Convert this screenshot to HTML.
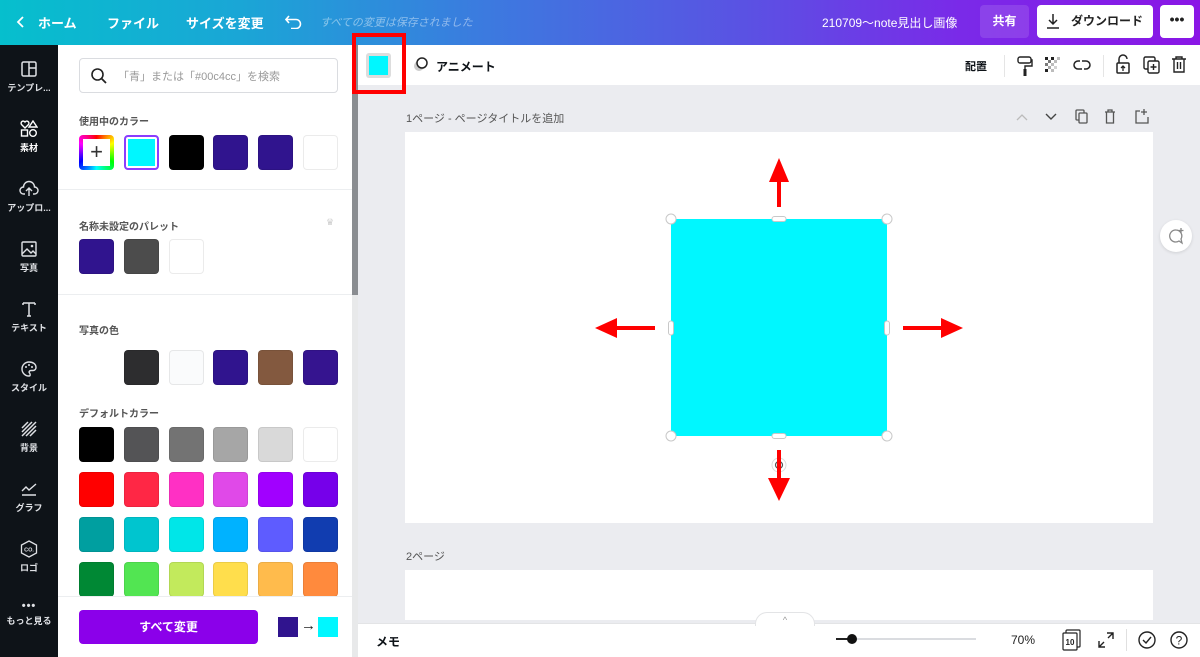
<!DOCTYPE html>
<html><head><meta charset="utf-8"><style>
*{margin:0;padding:0;box-sizing:border-box}
body{width:1200px;height:657px;overflow:hidden;font-family:"Liberation Sans","Noto Sans CJK JP",sans-serif;background:#ebecf0;position:relative;color:#0e1318}
.a{position:absolute}
.top{left:0;top:0;width:1200px;height:45px;background:linear-gradient(90deg,#06bfcd 0%,#1aa6d6 20%,#3b7bdf 40%,#5a52e3 62%,#7a2ae8 80%,#8a16e6 100%)}
.top .t{color:#fff;font-size:13px;font-weight:bold;top:13px}
.side{left:0;top:45px;width:58px;height:612px;background:#0e1318}
.si{position:absolute;left:0;width:58px;text-align:center;color:#dfe1e5;font-size:9px;font-weight:bold}
.si svg{display:block;margin:0 auto 3px}
.panel{left:58px;top:45px;width:294px;height:612px;background:#fff}
.sw{position:absolute;width:35px;height:35px;border-radius:4px;border:1px solid rgba(0,0,0,.08)}
.lb{position:absolute;left:79px;font-size:10px;font-weight:bold;color:#555}
.hr{position:absolute;left:58px;width:294px;height:1px;background:#eceef0}
</style></head><body>
<div class="a top">
 <svg class="a" style="left:16px;top:15px" width="10" height="14"><path d="M7 2 L2 7 L7 12" stroke="#fff" stroke-width="1.8" fill="none"/></svg>
 <div class="a t" style="left:38px">ホーム</div>
 <div class="a t" style="left:107px">ファイル</div>
 <div class="a t" style="left:186px">サイズを変更</div>
 <svg class="a" style="left:285px;top:13px" width="18" height="16"><path d="M4 3 L1 6.5 L4 10 M1.5 6.5 H11 a4.5 4.5 0 0 1 0 9 H6" stroke="#fff" stroke-width="1.6" fill="none"/></svg>
 <div class="a" style="left:320px;top:14px;font-size:11px;color:rgba(255,255,255,.45);font-style:italic">すべての変更は保存されました</div>
 <div class="a t" style="left:822px;font-weight:normal;font-size:12px;top:14px">210709〜note見出し画像</div>
 <div class="a" style="left:980px;top:5px;width:49px;height:33px;background:rgba(255,255,255,.12);border-radius:4px;color:#fff;font-size:12px;font-weight:bold;text-align:center;line-height:33px">共有</div>
 <div class="a" style="left:1037px;top:5px;width:116px;height:33px;background:#fff;border-radius:4px;font-size:12px;font-weight:bold;line-height:33px;padding-left:34px;color:#222">ダウンロード</div>
 <svg class="a" style="left:1046px;top:13px" width="14" height="16"><path d="M7 1 V11 M3 7 L7 11 L11 7 M1 15 H13" stroke="#222" stroke-width="1.5" fill="none"/></svg>
 <div class="a" style="left:1160px;top:5px;width:34px;height:33px;background:#fff;border-radius:4px;text-align:center;line-height:28px;font-weight:bold;font-size:14px;color:#222">•••</div>
</div>
<div class="a side">
 <div class="si" style="top:15px"><svg width="18" height="18"><rect x="2" y="2" width="14" height="14" rx="1.5" stroke="#dfe1e5" stroke-width="1.5" fill="none"/><path d="M9 2V16M9 8H16" stroke="#dfe1e5" stroke-width="1.5"/></svg>テンプレ...</div>
 <div class="si" style="top:75px;color:#fff"><svg width="18" height="18"><path d="M5 8 L1.5 4.5 a2 2 0 0 1 3.5-2.5 a2 2 0 0 1 3.5 2.5Z M13 1 L17 7 H9Z" stroke="#fff" stroke-width="1.4" fill="none"/><rect x="1.5" y="10" width="6" height="6" stroke="#fff" stroke-width="1.4" fill="none"/><circle cx="13" cy="13" r="3.3" stroke="#fff" stroke-width="1.4" fill="none"/></svg>素材</div>
 <div class="si" style="top:135px"><svg width="20" height="18"><path d="M6 14 H4.5 a3.5 3.5 0 0 1 0-7 a5.5 5.5 0 0 1 11 0 a3.5 3.5 0 0 1 0 7 H14 M10 16V8 M7 11 L10 8 L13 11" stroke="#dfe1e5" stroke-width="1.4" fill="none"/></svg>アップロ...</div>
 <div class="si" style="top:195px"><svg width="18" height="18"><rect x="2" y="2" width="14" height="14" rx="1" stroke="#dfe1e5" stroke-width="1.4" fill="none"/><path d="M2 14 L7 9 L11 13 L13 11 L16 14" stroke="#dfe1e5" stroke-width="1.4" fill="none"/><circle cx="12" cy="6" r="1.3" fill="#dfe1e5"/></svg>写真</div>
 <div class="si" style="top:255px"><svg width="18" height="18"><path d="M3 3H15M9 3V16M3 3V5M15 3V5M7 16H11" stroke="#dfe1e5" stroke-width="1.5" fill="none"/></svg>テキスト</div>
 <div class="si" style="top:315px"><svg width="18" height="18"><path d="M9 2 a7 7 0 1 0 0 14 c1.5 0 1.5-2 .5-3 c-1-1 0-2.5 1.5-2.5 H13 a3 3 0 0 0 3-3 C16 4 13 2 9 2Z" stroke="#dfe1e5" stroke-width="1.4" fill="none"/><circle cx="6" cy="7" r="1" fill="#dfe1e5"/><circle cx="9" cy="5" r="1" fill="#dfe1e5"/><circle cx="12" cy="7" r="1" fill="#dfe1e5"/></svg>スタイル</div>
 <div class="si" style="top:375px"><svg width="18" height="18"><path d="M2 8L8 2M2 12L12 2M2 16L16 2M6 16L16 6M10 16L16 10" stroke="#dfe1e5" stroke-width="1.5"/></svg>背景</div>
 <div class="si" style="top:435px"><svg width="18" height="18"><path d="M2 11 L6 7 L9 10 L16 4 M2 15H16" stroke="#dfe1e5" stroke-width="1.4" fill="none"/></svg>グラフ</div>
 <div class="si" style="top:495px"><svg width="20" height="18"><path d="M10 1 L17.5 5 V13 L10 17 L2.5 13 V5Z" stroke="#dfe1e5" stroke-width="1.3" fill="none"/><text x="10" y="11.5" font-size="5.5" fill="#dfe1e5" text-anchor="middle" font-weight="bold" font-family="Liberation Sans">CO.</text></svg>ロゴ</div>
 <div class="si" style="top:555px;font-size:9px"><div style="font-size:11px;letter-spacing:1px;margin-bottom:2px">•••</div>もっと見る</div>
</div>
<div class="a panel"></div>
<div class="a" style="left:352px;top:45px;width:6px;height:250px;background:#8a8d91"></div>
<div class="a" style="left:352px;top:295px;width:6px;height:362px;background:#e8e9ea"></div>
<div class="a" style="left:79px;top:58px;width:259px;height:35px;border:1px solid #dadce0;border-radius:4px"></div>
<svg class="a" style="left:90px;top:67px" width="18" height="18"><circle cx="7.5" cy="7.5" r="5.5" stroke="#222" stroke-width="1.6" fill="none"/><path d="M11.5 11.5L16 16" stroke="#222" stroke-width="1.8"/></svg>
<div class="a" style="left:118px;top:68px;font-size:11px;color:#999">「青」または「#00c4cc」を検索</div>

<div class="lb" style="top:113px">使用中のカラー</div>
<div class="sw" style="left:79px;top:135px;background:conic-gradient(red,yellow,lime,cyan,blue,magenta,red);border:none"><div style="position:absolute;left:4px;top:4px;width:27px;height:27px;background:#fff;text-align:center;line-height:26px;font-size:22px;color:#333">+</div></div>
<div class="sw" style="left:124px;top:135px;background:#00f7ff;border:2px solid #8b3dff;box-shadow:inset 0 0 0 2px #fff"></div>
<div class="sw" style="left:169px;top:135px;background:#000"></div>
<div class="sw" style="left:213px;top:135px;background:#30148e"></div>
<div class="sw" style="left:258px;top:135px;background:#30148e"></div>
<div class="sw" style="left:303px;top:135px;background:#fff"></div>
<div class="hr" style="top:189px"></div>
<div class="lb" style="top:218px">名称未設定のパレット</div>
<div class="a" style="left:326px;top:217px;font-size:9px;color:#ccc">♛</div>
<div class="sw" style="left:79px;top:239px;background:#30148e"></div>
<div class="sw" style="left:124px;top:239px;background:#4c4c4c"></div>
<div class="sw" style="left:169px;top:239px;background:#fff"></div>
<div class="hr" style="top:294px"></div>
<div class="lb" style="top:322px">写真の色</div>
<div class="sw" style="left:124px;top:350px;background:#2d2d2f"></div>
<div class="sw" style="left:169px;top:350px;background:#fafbfc"></div>
<div class="sw" style="left:213px;top:350px;background:#30148e"></div>
<div class="sw" style="left:258px;top:350px;background:#83593f"></div>
<div class="sw" style="left:303px;top:350px;background:#35148f"></div>
<div class="lb" style="top:405px">デフォルトカラー</div>
<div class="sw" style="left:79px;top:427px;background:#000"></div>
<div class="sw" style="left:124px;top:427px;background:#545456"></div>
<div class="sw" style="left:169px;top:427px;background:#737373"></div>
<div class="sw" style="left:213px;top:427px;background:#a6a6a6"></div>
<div class="sw" style="left:258px;top:427px;background:#d9d9d9"></div>
<div class="sw" style="left:303px;top:427px;background:#fff"></div>
<div class="sw" style="left:79px;top:472px;background:#ff0000"></div>
<div class="sw" style="left:124px;top:472px;background:#ff2745"></div>
<div class="sw" style="left:169px;top:472px;background:#ff30c4"></div>
<div class="sw" style="left:213px;top:472px;background:#e049e8"></div>
<div class="sw" style="left:258px;top:472px;background:#a100ff"></div>
<div class="sw" style="left:303px;top:472px;background:#7600ea"></div>
<div class="sw" style="left:79px;top:517px;background:#009fa0"></div>
<div class="sw" style="left:124px;top:517px;background:#00c5cf"></div>
<div class="sw" style="left:169px;top:517px;background:#00e6e8"></div>
<div class="sw" style="left:213px;top:517px;background:#00b2ff"></div>
<div class="sw" style="left:258px;top:517px;background:#5e5cff"></div>
<div class="sw" style="left:303px;top:517px;background:#113db0"></div>
<div class="sw" style="left:79px;top:562px;background:#008834"></div>
<div class="sw" style="left:124px;top:562px;background:#52e552"></div>
<div class="sw" style="left:169px;top:562px;background:#c2ea5c"></div>
<div class="sw" style="left:213px;top:562px;background:#ffde4c"></div>
<div class="sw" style="left:258px;top:562px;background:#ffbb4c"></div>
<div class="sw" style="left:303px;top:562px;background:#ff8a3d"></div>
<div class="a" style="left:58px;top:596px;width:294px;height:61px;background:#fff;border-top:1px solid #eceef0"></div>
<div class="a" style="left:79px;top:610px;width:179px;height:34px;background:#8b00ea;border-radius:4px;color:#fff;font-size:12px;font-weight:bold;text-align:center;line-height:34px">すべて変更</div>
<div class="a" style="left:278px;top:617px;width:20px;height:20px;background:#30148e"></div>
<div class="a" style="left:301px;top:617px;font-size:15px;color:#222">→</div>
<div class="a" style="left:318px;top:617px;width:20px;height:20px;background:#00f7ff"></div>

<!-- toolbar -->
<div class="a" style="left:358px;top:45px;width:842px;height:40px;background:#fff"></div>
<div class="a" style="left:366px;top:53px;width:25px;height:25px;background:#ddd;border-radius:3px"></div>
<div class="a" style="left:369px;top:56px;width:19px;height:19px;background:#00f7ff"></div>
<div class="a" style="left:352px;top:33px;width:54px;height:61px;border:4px solid #ff0000"></div>
<svg class="a" style="left:411px;top:55px" width="20" height="20"><circle cx="8" cy="11" r="5" fill="#ccc"/><circle cx="11" cy="8" r="5" stroke="#222" stroke-width="1.5" fill="#fff"/></svg>
<div class="a" style="left:436px;top:58px;font-size:12px;font-weight:bold">アニメート</div>
<div class="a" style="left:965px;top:58px;font-size:11px;font-weight:bold">配置</div>
<div class="a" style="left:1004px;top:55px;width:1px;height:22px;background:#e5e5e5"></div>
<svg class="a" style="left:1016px;top:55px" width="18" height="22"><rect x="2" y="2" width="13" height="6" rx="2" stroke="#222" stroke-width="1.4" fill="none"/><path d="M15 5H16V11H9V14" stroke="#222" stroke-width="1.4" fill="none"/><rect x="7.5" y="14" width="3" height="7" fill="#222"/></svg>
<svg class="a" style="left:1045px;top:57px" width="16" height="16"><g fill="#222"><rect x="0" y="0" width="3" height="3"/><rect x="6" y="0" width="3" height="3"/><rect x="12" y="0" width="3" height="3" opacity=".3"/><rect x="3" y="3" width="3" height="3" opacity=".6"/><rect x="9" y="3" width="3" height="3" opacity=".3"/><rect x="0" y="6" width="3" height="3" opacity=".6"/><rect x="6" y="6" width="3" height="3" opacity=".3"/><rect x="3" y="9" width="3" height="3" opacity=".4"/><rect x="9" y="9" width="3" height="3" opacity=".2"/><rect x="0" y="12" width="3" height="3"/><rect x="6" y="12" width="3" height="3" opacity=".3"/></g></svg>
<svg class="a" style="left:1073px;top:57px" width="18" height="16"><path d="M7 4H5a4 4 0 0 0 0 8H9 M11 12H13a4 4 0 0 0 0-8H9" stroke="#222" stroke-width="1.5" fill="none"/></svg>
<div class="a" style="left:1103px;top:55px;width:1px;height:22px;background:#e5e5e5"></div>
<svg class="a" style="left:1115px;top:54px" width="16" height="20"><path d="M4 9V5a4 4 0 0 1 8 0" stroke="#222" stroke-width="1.5" fill="none"/><rect x="2" y="9" width="12" height="10" rx="1" stroke="#222" stroke-width="1.5" fill="none"/><path d="M8 17V12M6 14L8 12L10 14" stroke="#222" stroke-width="1.3" fill="none"/></svg>
<svg class="a" style="left:1143px;top:56px" width="18" height="18"><rect x="1" y="1" width="11" height="12" rx="1.5" stroke="#222" stroke-width="1.4" fill="none"/><rect x="5" y="5" width="11" height="12" rx="1.5" stroke="#222" stroke-width="1.4" fill="#fff"/><path d="M10.5 8V14M7.5 11H13.5" stroke="#222" stroke-width="1.4"/></svg>
<svg class="a" style="left:1171px;top:55px" width="16" height="19"><path d="M1 4H15M5 4V2H11V4M3 4V17H13V4M6.5 7V14M9.5 7V14" stroke="#222" stroke-width="1.4" fill="none"/></svg>

<!-- canvas -->
<div class="a" style="left:406px;top:110px;font-size:11px;color:#555">1ページ - ページタイトルを追加</div>
<svg class="a" style="left:1012px;top:108px" width="140" height="18"><path d="M5 12L10 7L15 12" stroke="#bbb" stroke-width="1.3" fill="none"/><path d="M34 6L39 11L44 6" stroke="#444" stroke-width="1.4" fill="none"/><rect x="64" y="2" width="8" height="10" rx="1" stroke="#555" stroke-width="1.3" fill="none"/><rect x="67" y="5" width="8" height="10" rx="1" stroke="#555" stroke-width="1.3" fill="#ebecf0"/><path d="M93 4H103M96 4V2H100V4M94.5 4V15H101.5V4" stroke="#555" stroke-width="1.3" fill="none"/><path d="M128 3H124V15H136V9M132 1V7M129 4H135" stroke="#555" stroke-width="1.3" fill="none"/></svg>
<div class="a" style="left:405px;top:132px;width:748px;height:391px;background:#fff"></div>
<div class="a" style="left:1160px;top:220px;width:32px;height:32px;border-radius:50%;background:#fff;box-shadow:0 1px 3px rgba(0,0,0,.12)"></div>
<svg class="a" style="left:1166px;top:226px" width="20" height="20"><path d="M10 4a6 6 0 1 0 3 11L16 17 15 13a6 6 0 0 0-5-9" stroke="#888" stroke-width="1.3" fill="none"/><path d="M15 2V7M12.5 4.5H17.5" stroke="#888" stroke-width="1.3"/></svg>
<svg class="a" style="left:0;top:0" width="1200" height="657">
 <rect x="671" y="219" width="216" height="217" fill="#00f7ff"/>
 <g fill="#fff" stroke="#c8c8c8" stroke-width="1"><circle cx="671" cy="219" r="5"/><circle cx="887" cy="219" r="5"/><circle cx="671" cy="436" r="5"/><circle cx="887" cy="436" r="5"/>
 <rect x="772" y="216.5" width="14" height="5" rx="2.5"/><rect x="772" y="433.5" width="14" height="5" rx="2.5"/><rect x="668.5" y="321" width="5" height="14" rx="2.5"/><rect x="884.5" y="321" width="5" height="14" rx="2.5"/></g>
 <circle cx="779" cy="465" r="7" fill="#fff" stroke="#ddd"/><circle cx="779" cy="465" r="3.5" fill="none" stroke="#555" stroke-width="1.2"/>
 <g fill="#ff0000"><rect x="777" y="179" width="4" height="28"/><path d="M779 158L769 182H789Z"/>
 <rect x="775" y="328" width="0" height="0"/>
 <rect x="614" y="326" width="41" height="4"/><path d="M595 328L617 318V338Z"/>
 <rect x="903" y="326" width="41" height="4"/><path d="M963 328L941 318V338Z"/>
 <rect x="777" y="450" width="4" height="30"/><path d="M779 501L768 478H790Z"/></g>
</svg>
<div class="a" style="left:406px;top:548px;font-size:11px;color:#555">2ページ</div>
<div class="a" style="left:405px;top:570px;width:748px;height:50px;background:#fff"></div>
<div class="a" style="left:358px;top:623px;width:842px;height:34px;background:#fff;border-top:1px solid #e3e4e6"></div>
<div class="a" style="left:755px;top:612px;width:60px;height:14px;background:#fff;border-radius:12px 12px 0 0;border:1px solid #e3e4e6;border-bottom:none;text-align:center;font-size:9px;color:#999;line-height:14px">^</div>
<div class="a" style="left:376px;top:633px;font-size:12px;font-weight:bold">メモ</div>
<div class="a" style="left:836px;top:638px;width:140px;height:2px;background:#dadce0"></div>
<div class="a" style="left:836px;top:638px;width:14px;height:2px;background:#222"></div>
<div class="a" style="left:847px;top:634px;width:10px;height:10px;border-radius:50%;background:#111"></div>
<div class="a" style="left:1011px;top:633px;font-size:12px;color:#222">70%</div>
<svg class="a" style="left:1062px;top:629px" width="20" height="22"><rect x="4" y="1" width="14" height="17" rx="1" stroke="#222" stroke-width="1.2" fill="#fff"/><rect x="1" y="4" width="14" height="17" rx="1" stroke="#222" stroke-width="1.2" fill="#fff"/><text x="8" y="16" font-size="8" font-weight="bold" text-anchor="middle" fill="#222" font-family="Liberation Sans">10</text></svg>
<svg class="a" style="left:1097px;top:631px" width="18" height="18"><path d="M10 2H16V8M16 2L11 7M8 16H2V10M2 16L7 11" stroke="#222" stroke-width="1.4" fill="none"/></svg>
<div class="a" style="left:1126px;top:629px;width:1px;height:22px;background:#e0e0e0"></div>
<svg class="a" style="left:1137px;top:630px" width="20" height="20"><circle cx="10" cy="10" r="8" stroke="#222" stroke-width="1.4" fill="none"/><path d="M6 10L9 13L14 7" stroke="#222" stroke-width="1.4" fill="none"/></svg>
<svg class="a" style="left:1169px;top:630px" width="20" height="20"><circle cx="10" cy="10" r="8" stroke="#222" stroke-width="1.4" fill="none"/><text x="10" y="14.5" font-size="12" text-anchor="middle" fill="#222" font-family="Liberation Sans">?</text></svg>
</body></html>
